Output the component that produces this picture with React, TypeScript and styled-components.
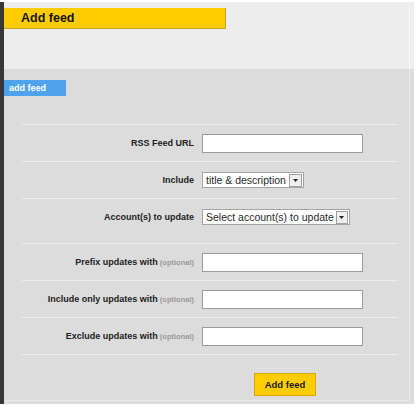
import React from 'react';
import styled, { createGlobalStyle } from 'styled-components';

const GlobalStyle = createGlobalStyle`
    html, body {
        margin: 0;
        padding: 0;
        background: #ffffff;
        font-family: "Liberation Sans", Arial, sans-serif;
    }
`;

type Field = { label: string; optional?: boolean; kind: 'text' | 'select'; value?: string; width?: number; gapAfter?: boolean };

const fields: Field[] = [
    { label: 'RSS Feed URL', kind: 'text' },
    { label: 'Include', kind: 'select', value: 'title & description', width: 102 },
    { label: 'Account(s) to update', kind: 'select', value: 'Select account(s) to update', width: 148, gapAfter: true },
    { label: 'Prefix updates with', optional: true, kind: 'text' },
    { label: 'Include only updates with', optional: true, kind: 'text' },
    { label: 'Exclude updates with', optional: true, kind: 'text' },
];

export default function App() {
    return (
        <>
            <GlobalStyle />
            <Page>
                <Header>
                    <Title>Add feed</Title>
                </Header>
                <Main>
                    <Tab>add feed</Tab>
                    <Form onSubmit={e => e.preventDefault()}>
                        {fields.map((f, i) => (
                            <Row key={f.label} $gapAfter={f.gapAfter} $last={i === fields.length - 1}>
                                <Label>
                                    {f.label}
                                    {f.optional && <Optional> (optional)</Optional>}
                                </Label>
                                {f.kind === 'text' ? (
                                    <TextInput type="text" />
                                ) : (
                                    <SelectBox style={{ width: f.width }}>
                                        <SelectText>{f.value}</SelectText>
                                        <Arrow>
                                            <svg width="5" height="3" viewBox="0 0 5 3">
                                                <path d="M0 0h5L2.5 3z" fill="#222" />
                                            </svg>
                                        </Arrow>
                                    </SelectBox>
                                )}
                            </Row>
                        ))}
                        <ButtonRow>
                            <SubmitButton type="submit">Add feed</SubmitButton>
                        </ButtonRow>
                    </Form>
                </Main>
            </Page>
        </>
    );
}

const Page = styled.div`
    width: 410px;
    margin-top: 2px;
    border-left: 4px solid #383838;
    padding-bottom: 3px;
    background: linear-gradient(#eeeded 67px, #dcdcdc 67px);
`
const Header = styled.div`
    height: 67px;
    box-sizing: border-box;
    padding-top: 6px;
    margin-right: 4px;
    border-right: 1px solid #f6f6f6;
    background: #eeeded;
`
const Title = styled.h1`
    margin: 0;
    width: 222px;
    height: 21px;
    box-sizing: border-box;
    padding-left: 17px;
    background: #ffcc00;
    border-right: 1px solid #c9a21a;
    border-bottom: 1px solid #c9a21a;
    color: #151515;
    font-size: 12.5px;
    font-weight: 700;
    line-height: 20px;
`
const Main = styled.div`
    margin-right: 4px;
    padding-top: 11px;
    padding-bottom: 4px;
    border-right: 1px solid #e9e9e9;
    border-bottom: 1px solid #e9e9e9;
    background: #dcdcdc;
`
const Tab = styled.div`
    width: 62px;
    height: 16px;
    box-sizing: border-box;
    padding-left: 5px;
    background: #4fa3ec;
    color: #ffffff;
    font-size: 9px;
    font-weight: 700;
    line-height: 16px;
`
const Form = styled.form`
    margin: 28px 0 0 18px;
    width: 376px;
`
const Row = styled.div<{ $gapAfter?: boolean; $last?: boolean }>`
    display: grid;
    grid-template-columns: 172px 161px;
    column-gap: 8px;
    align-items: center;
    height: 36px;
    padding-bottom: ${p => (p.$gapAfter ? 8 : 0)}px;
    border-top: 1px solid #ececec;
    border-bottom: ${p => (p.$last ? '1px solid #ececec' : 'none')};
`
const Label = styled.label`
    text-align: right;
    color: #222222;
    font-size: 9px;
    font-weight: 700;
    white-space: nowrap;
`
const Optional = styled.span`
    color: #9a9a9a;
    font-size: 7.5px;
`
const TextInput = styled.input`
    width: 161px;
    height: 19px;
    box-sizing: border-box;
    margin: 0;
    border: 1px solid #9c9c9c;
    background: #ffffff;
    outline: none;
`
const SelectBox = styled.div`
    display: flex;
    align-items: center;
    justify-content: space-between;
    height: 16px;
    box-sizing: border-box;
    padding: 0 1px 0 3px;
    border: 1px solid #a5a5a5;
    background: #ffffff;
`
const SelectText = styled.span`
    color: #2a2a2a;
    font-size: 10.5px;
    white-space: nowrap;
`
const Arrow = styled.span`
    display: flex;
    align-items: center;
    justify-content: center;
    width: 11px;
    height: 11px;
    margin-left: 2px;
    border: 1px solid #a0a0a0;
    background: #f0f0f0;
`
const ButtonRow = styled.div`
    padding: 18px 0 0 232px;
`
const SubmitButton = styled.button`
    width: 62px;
    height: 23px;
    margin: 0;
    padding: 0;
    border: 1px solid #d8a800;
    background: #ffcc00;
    color: #1a1a1a;
    font-family: "Liberation Sans", Arial, sans-serif;
    font-size: 9.5px;
    font-weight: 700;
    cursor: pointer;
`
